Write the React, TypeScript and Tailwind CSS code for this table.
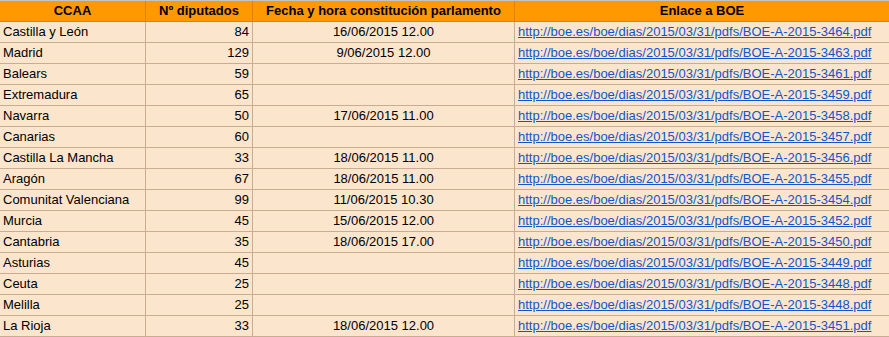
import React from "react";

const rows: [string, string, string, string][] = [
  ["Castilla y León", "84", "16/06/2015 12.00", "3464"],
  ["Madrid", "129", "9/06/2015 12.00", "3463"],
  ["Balears", "59", "", "3461"],
  ["Extremadura", "65", "", "3459"],
  ["Navarra", "50", "17/06/2015 11.00", "3458"],
  ["Canarias", "60", "", "3457"],
  ["Castilla La Mancha", "33", "18/06/2015 11.00", "3456"],
  ["Aragón", "67", "18/06/2015 11.00", "3455"],
  ["Comunitat Valenciana", "99", "11/06/2015 10.30", "3454"],
  ["Murcia", "45", "15/06/2015 12.00", "3452"],
  ["Cantabria", "35", "18/06/2015 17.00", "3450"],
  ["Asturias", "45", "", "3449"],
  ["Ceuta", "25", "", "3448"],
  ["Melilla", "25", "", "3448"],
  ["La Rioja", "33", "18/06/2015 12.00", "3451"],
];

export default function App() {
  return (
    <div
      className="w-[889px] h-[337px] overflow-hidden bg-white border-t border-[#c4c4c4] text-[13px] text-black"
      style={{ fontFamily: '"Liberation Sans", Arial, sans-serif' }}
    >
      <div className="grid grid-cols-[145px_106px_261px_1fr] gap-x-px bg-[#d98500] border-b border-[#d98500] w-[1000px]">
        <div className="h-5 leading-5 bg-[#ff9900] font-bold text-center">CCAA</div>
        <div className="h-5 leading-5 bg-[#ff9900] font-bold text-center">Nº diputados</div>
        <div className="h-5 leading-5 bg-[#ff9900] font-bold text-center">Fecha y hora constitución parlamento</div>
        <div className="h-5 leading-5 bg-[#ff9900] font-bold text-center pr-[111px]">Enlace a BOE</div>
      </div>
      {rows.map((r, i) => (
        <div
          key={i}
          className="grid grid-cols-[145px_106px_261px_1fr] gap-x-px bg-[#c9ad92] border-b border-[#c9ad92] w-[1000px]"
        >
          <div className="h-5 leading-5 bg-[#fce5cd] pl-[3px] whitespace-nowrap">{r[0]}</div>
          <div className="h-5 leading-5 bg-[#fce5cd] pr-[3px] text-right">{r[1]}</div>
          <div className="h-5 leading-5 bg-[#fce5cd] text-center">{r[2]}</div>
          <div className="h-5 leading-5 bg-[#fce5cd] pl-[3px] whitespace-nowrap">
            <span className="text-[#1155cc] underline">
              {`http://boe.es/boe/dias/2015/03/31/pdfs/BOE-A-2015-${r[3]}.pdf`}
            </span>
          </div>
        </div>
      ))}
    </div>
  );
}
